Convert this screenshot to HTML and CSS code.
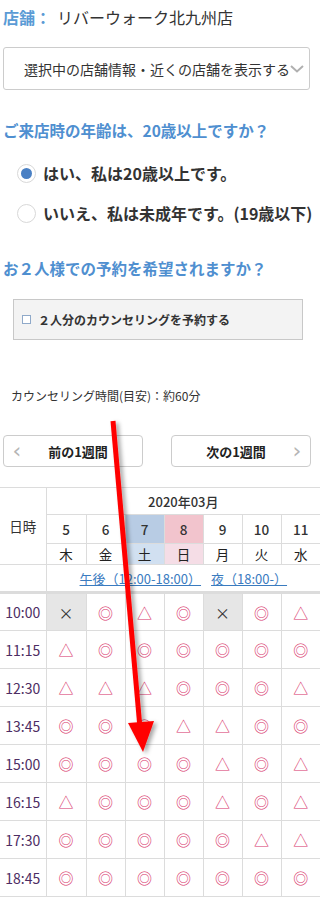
FILE: index.html
```html
<!DOCTYPE html>
<html lang="ja">
<head>
<meta charset="utf-8">
<title>予約</title>
<link rel="stylesheet" href="styles.css">
</head>
<body>
<div class="page">
  <div class="wrap">
    <div class="shop"><span class="shop-label">店舗：</span><span class="shop-name">リバーウォーク北九州店</span></div>
    <div class="select">
      <span class="select-text">選択中の店舗情報・近くの店舗を表示する</span>
      <svg class="select-chev" width="14" height="8" viewBox="0 0 14 8"><path d="M1 1 L7 6.5 L13 1" fill="none" stroke="#b0b0b0" stroke-width="2"/></svg>
    </div>
    <h2 class="q q1">ご来店時の年齢は、20歳以上ですか？</h2>
    <div class="radio-row r1"><span class="radio checked"></span><span class="radio-label">はい、私は20歳以上です。</span></div>
    <div class="radio-row r2"><span class="radio"></span><span class="radio-label">いいえ、私は未成年です。(19歳以下)</span></div>
    <h2 class="q q2">お２人様での予約を希望されますか？</h2>
    <div class="pair"><span class="cb"></span><span class="pair-label">２人分のカウンセリングを予約する</span></div>
    <p class="note">カウンセリング時間(目安)：約60分</p>
    <div class="weeks">
      <div class="wbtn"><span class="chev">‹</span><span class="wtext">前の1週間</span></div>
      <div class="wbtn"><span class="wtext">次の1週間</span><span class="chev">›</span></div>
    </div>
  </div>
  <table class="cal">
    <colgroup><col class="c0"><col class="c1"><col class="cn"><col class="cn"><col class="cn"><col class="cn"><col class="cn"><col class="cn"></colgroup>
    <tr class="h1"><th rowspan="3" class="dt">日時</th><th colspan="7" class="month">2020年03月</th></tr>
    <tr class="h2"><th>5</th><th>6</th><th class="sat">7</th><th class="sun">8</th><th>9</th><th>10</th><th>11</th></tr>
    <tr class="h3"><th>木</th><th>金</th><th class="sat2">土</th><th class="sun2">日</th><th>月</th><th>火</th><th>水</th></tr>
    <tr class="h4"><th></th><th colspan="7" class="links"><a>午後（12:00-18:00）</a><a>夜（18:00-）</a></th></tr>
    <tr><td class="t">10:00</td><td class="x">×</td><td class="o">◎</td><td class="o">△</td><td class="o">◎</td><td class="x">×</td><td class="o">◎</td><td class="o">△</td></tr>
    <tr><td class="t">11:15</td><td class="o">△</td><td class="o">◎</td><td class="o">◎</td><td class="o">◎</td><td class="o">◎</td><td class="o">◎</td><td class="o">◎</td></tr>
    <tr><td class="t">12:30</td><td class="o">△</td><td class="o">△</td><td class="o">△</td><td class="o">◎</td><td class="o">◎</td><td class="o">◎</td><td class="o">△</td></tr>
    <tr><td class="t">13:45</td><td class="o">◎</td><td class="o">◎</td><td class="o">◎</td><td class="o">△</td><td class="o">△</td><td class="o">◎</td><td class="o">◎</td></tr>
    <tr><td class="t">15:00</td><td class="o">◎</td><td class="o">◎</td><td class="o">◎</td><td class="o">◎</td><td class="o">△</td><td class="o">◎</td><td class="o">△</td></tr>
    <tr><td class="t">16:15</td><td class="o">△</td><td class="o">◎</td><td class="o">◎</td><td class="o">◎</td><td class="o">△</td><td class="o">◎</td><td class="o">△</td></tr>
    <tr><td class="t">17:30</td><td class="o">◎</td><td class="o">◎</td><td class="o">◎</td><td class="o">◎</td><td class="o">◎</td><td class="o">△</td><td class="o">△</td></tr>
    <tr><td class="t">18:45</td><td class="o">◎</td><td class="o">◎</td><td class="o">◎</td><td class="o">◎</td><td class="o">◎</td><td class="o">◎</td><td class="o">◎</td></tr>
  </table>
  <svg class="arrow" width="320" height="898" viewBox="0 0 320 898">
    <defs>
      <filter id="sh" x="-50%" y="-10%" width="200%" height="120%">
        <feDropShadow dx="3" dy="2" stdDeviation="2" flood-color="#000" flood-opacity="0.35"/>
      </filter>
    </defs>
    <g filter="url(#sh)">
      <line x1="113" y1="421" x2="140" y2="728" stroke="#ff0000" stroke-width="5"/>
      <polygon points="128,723 154,721 143,752" fill="#ff0000"/>
    </g>
  </svg>
</div>
</body>
</html>
```
FILE: styles.css
```css
* { box-sizing: border-box; }
html, body { margin: 0; padding: 0; background: #fff; }
body {
  font-family: "Noto Sans CJK JP", "Noto Sans", sans-serif;
  color: #333;
  overflow-x: hidden;
}
.page { position: relative; width: 320px; height: 898px; overflow: hidden; }
.wrap { padding: 5px 3px 0 3px; }
.shop { font-size: 16px; line-height: 24px; height: 24px; white-space: nowrap; }
.shop-label { color: #5b9bd5; font-weight: bold; margin-right: 6px; }
.shop-name { color: #333; }
.select {
  margin-top: 18px; width: 307px; height: 43px;
  border: 1px solid #ccc; border-radius: 3px;
  display: flex; align-items: center; justify-content: space-between;
  padding: 0 6px 0 20px;
}
.select-text { font-size: 14px; color: #333; white-space: nowrap; }
.select-chev { flex: none; }
.q {
  margin: 0; font-size: 15.5px; line-height: 24px; font-weight: bold;
  color: #4f8fd0; white-space: nowrap;
}
.q1 { margin-top: 28px; }
.q2 { margin-top: 31px; }
.radio-row { display: flex; align-items: center; height: 24px; gap: 7px; padding-left: 14px; white-space: nowrap; }
.r1 { margin-top: 19px; }
.r2 { margin-top: 16px; }
.radio {
  flex: none; width: 19px; height: 19px; border-radius: 50%;
  border: 1px solid #d8d8d8; background: #fff; position: relative;
}
.radio.checked::after {
  content: ""; position: absolute; left: 3px; top: 3px; width: 11px; height: 11px;
  border-radius: 50%; background: #4a80c4;
}
.radio-label { font-size: 16px; font-weight: bold; color: #333; }
.pair {
  margin: 19px 0 0 10px; width: 290px; height: 41px;
  background: #f3f3f3; border: 1px solid #c8c8c8;
  display: flex; align-items: center; padding-left: 8px; gap: 7px;
}
.cb { width: 9px; height: 9px; border: 1px solid #8fa9c9; background: #fff; flex: none; }
.pair-label { font-size: 12px; font-weight: bold; color: #333; white-space: nowrap; }
.note { margin: 47px 0 0 8px; font-size: 12px; line-height: 18px; color: #333; }
.weeks { margin-top: 30px; display: flex; justify-content: space-between; width: 308px; }
.wbtn {
  width: 140px; height: 32px; border: 1px solid #ccc; border-radius: 4px;
  display: flex; align-items: center; justify-content: space-between; padding: 0 8px;
}
.wtext { font-size: 13px; font-weight: bold; color: #222; flex: 1; text-align: center; }
.chev { color: #b5b5b5; font-size: 22px; line-height: 20px; width: 10px; text-align: center; font-family: "DejaVu Sans", sans-serif; }
.cal {
  margin-top: 20px; width: 320px; table-layout: fixed;
  border-collapse: collapse; font-size: 13px;
}
.c0 { width: 46px; }
.c1 { width: 40px; }
.cn { width: 39px; }
.cal th, .cal td { border: 1px solid #dcdcdc; text-align: center; padding: 0; }
.cal th:first-child, .cal td:first-child { border-left: none; }
.cal th:last-child, .cal td:last-child { border-right: none; }
.h1 { height: 27px; }
.h2 { height: 29px; }
.h3 { height: 20px; }
.h4 { height: 28px; }
.h4 th { border-bottom: 3px solid #dcdcdc; }
.dt { font-weight: normal; font-size: 13.5px; color: #333; }
.month { font-weight: 500; color: #333; font-size: 13px; }
.h2 th { font-weight: 500; font-size: 13.5px; color: #333; }
.h3 th { font-weight: normal; font-size: 13.5px; color: #222; }
.sat { background: #b8cce4; }
.sun { background: #f2c4cd; }
.sat2 { background: #d1e0f1; }
.sun2 { background: #f5dde6; }
.links { font-weight: normal; }
.links a { color: #3a7bbf; text-decoration: underline; font-size: 13px; margin: 0 5px; }
.cal td { height: 38px; }
.t { color: #4d2d63; font-size: 14px; }
.o { color: #d8346a; font-size: 15px; }
.x { background: #e6e6e6; color: #333; font-size: 15px; }
.arrow { position: absolute; left: 0; top: 0; pointer-events: none; }
```
